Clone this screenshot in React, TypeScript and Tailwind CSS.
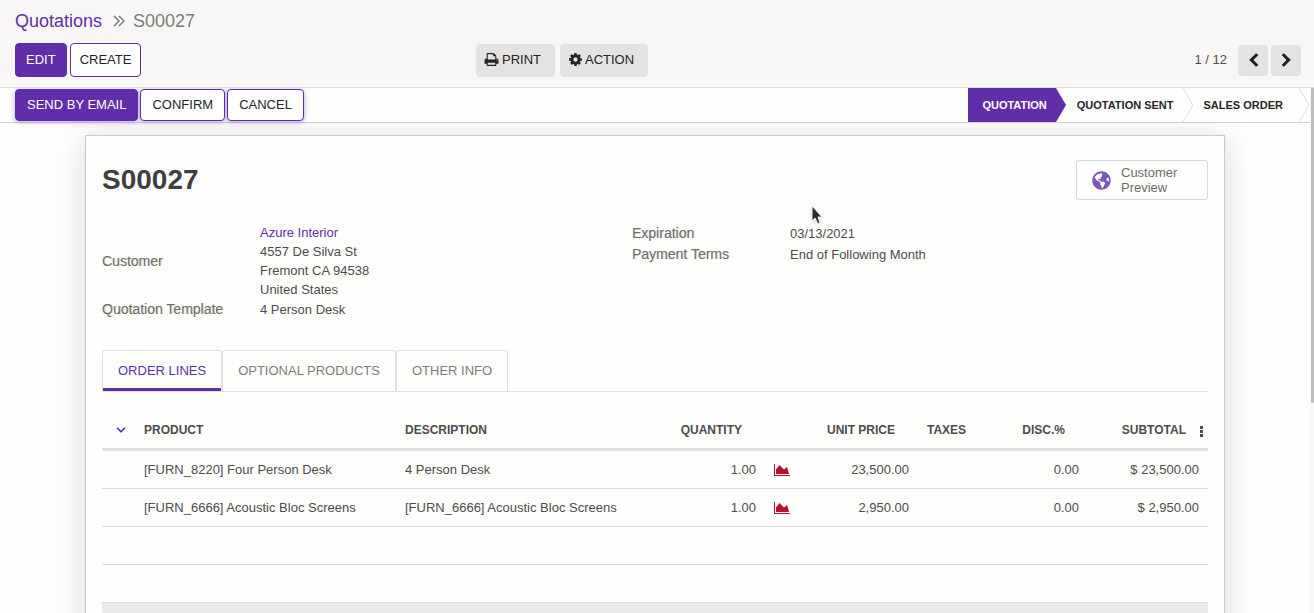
import { ReactNode, useState } from "react";
import { ChevronDown } from "lucide-react";
import { FaGlobeAmericas } from "react-icons/fa";

// ===== Types =====
type OrderLine = {
  product: string;
  description: string;
  quantity: string;
  unitPrice: string;
  discount: string;
  subtotal: string;
};

// ===== Data =====
const orderLines: OrderLine[] = [
  {
    product: "[FURN_8220] Four Person Desk",
    description: "4 Person Desk",
    quantity: "1.00",
    unitPrice: "23,500.00",
    discount: "0.00",
    subtotal: "$ 23,500.00",
  },
  {
    product: "[FURN_6666] Acoustic Bloc Screens",
    description: "[FURN_6666] Acoustic Bloc Screens",
    quantity: "1.00",
    unitPrice: "2,950.00",
    discount: "0.00",
    subtotal: "$ 2,950.00",
  },
];

const tabs = ["ORDER LINES", "OPTIONAL PRODUCTS", "OTHER INFO"];

const iconPaths = {
  print:
    "M448 1536h896v-256h-896v256zm0-640h896v-384h-160q-40 0-68-28t-28-68v-160h-640v640zm1152 64q0-26-19-45t-45-19-45 19-19 45 19 45 45 19 45-19 19-45zm128 0v416q0 13-9.5 22.5t-22.5 9.5h-224v160q0 40-28 68t-68 28h-960q-40 0-68-28t-28-68v-160h-224q-13 0-22.5-9.5t-9.5-22.5v-416q0-79 56.5-135.5t135.5-56.5h64v-544q0-40 28-68t68-28h672q40 0 88 20t76 48l152 152q28 28 48 76t20 88v256h64q79 0 135.5 56.5t56.5 135.5z",
  cog: "M1152 896q0-106-75-181t-181-75-181 75-75 181 75 181 181 75 181-75 75-181zm512-109v222q0 12-8 23t-20 13l-185 28q-19 54-39 91 35 50 107 138 10 12 10 25t-9 23q-27 37-99 108t-94 71q-12 0-26-9l-138-108q-44 23-91 38-16 136-29 186-7 28-36 28h-222q-14 0-24.5-8.5t-11.5-21.5l-28-184q-49-16-90-37l-141 107q-10 9-25 9-14 0-25-11-126-114-165-168-7-10-7-23 0-12 8-23 15-21 51-66.5t54-70.5q-27-50-41-99l-183-27q-13-2-21-12.5t-8-23.5v-222q0-12 8-23t19-13l186-28q14-46 39-92-40-57-107-138-10-12-10-24 0-10 9-23 26-36 98.5-107.5t94.5-71.5q13 0 26 10l138 107q44-23 91-38 16-136 29-186 7-28 36-28h222q14 0 24.5 8.5t11.5 21.5l28 184q49 16 90 37l142-107q9-9 24-9 13 0 25 10 129 119 165 170 7 8 7 22 0 12-8 23-15 21-51 66.5t-54 70.5q26 50 41 98l183 28q13 2 21 12.5t8 23.5z",
  left: "M1427 301l-531 531 531 531q19 19 19 45t-19 45l-166 166q-19 19-45 19t-45-19l-742-742q-19-19-19-45t19-45l742-742q19-19 45-19t45 19l166 166q19 19 19 45t-19 45z",
  right:
    "M1363 877l-742 742q-19 19-45 19t-45-19l-166-166q-19-19-19-45t19-45l531-531-531-531q-19-19-19-45t19-45l166-166q19-19 45-19t45 19l742 742q19 19 19 45t-19 45z",
};

// ===== Icons =====
function Icon({ name }: { name: keyof typeof iconPaths }) {
  return (
    <svg viewBox="0 0 1792 1792" className="size-[15px] shrink-0 fill-current" aria-hidden="true">
      <path d={iconPaths[name]} />
    </svg>
  );
}

function AreaChartIcon() {
  return (
    <svg viewBox="0 0 2048 1792" className="h-[14px] w-4 fill-[#b5102f]" aria-hidden="true">
      <path d="M2048 1536v128h-2048v-1536h128v1408h1920zM1664 512l256 896h-1664v-576l448-576 576 576z" />
    </svg>
  );
}

// ===== Status bar separator =====
function StepArrow() {
  return (
    <svg viewBox="0 0 11 34" className="h-[34px] w-[11px]" fill="none" aria-hidden="true">
      <path d="M0 0L10 17L0 34" stroke="#dcdde1" />
    </svg>
  );
}

// ===== Form row =====
function Field({ label, children }: { label: string; children: ReactNode }) {
  return (
    <div className="flex items-center">
      <dt className="w-[158px] shrink-0 pb-px text-sm text-[#6c6c68] [text-shadow:1px_0_0_#6c6c6840]">
        {label}
      </dt>
      <dd>{children}</dd>
    </div>
  );
}

// ===== Component =====
export default function App() {
  const [activeTab, setActiveTab] = useState(tabs[0]);

  return (
    <div className="flex h-screen flex-col overflow-hidden bg-[#fefefd] font-['Liberation_Sans',Arial,sans-serif] text-[13px] leading-[19px] text-[#4c4c4c]">
      {/* Control panel */}
      <header className="shrink-0 border-b border-[#dcdcde] bg-[#f8f7f6] pr-[13px] pb-2.5 pl-[15px]">
        <nav aria-label="Breadcrumb" className="flex h-[43px] items-center pb-0.5 text-lg text-[#7c7c79]">
          <a href="#quotations" className="text-[#5f2fa5]">
            Quotations
          </a>
          <svg
            viewBox="0 0 12 12"
            className="mr-2 ml-[11px] size-3 fill-none stroke-current"
            strokeWidth="1.5"
            aria-hidden="true"
          >
            <path d="M1 1l5 5-5 5M6 1l5 5-5 5" />
          </svg>
          <span>S00027</span>
        </nav>

        <div className="grid grid-cols-[461fr_825fr] items-center">
          <div className="flex gap-[3px]">
            <button className="h-[34px] rounded border border-[#5f2ea8] bg-[#5f2ea8] px-2.5 pb-0.5 text-white">
              EDIT
            </button>
            <button className="h-[34px] rounded border border-[#5f2ea8] bg-white px-[9px] pb-0.5 text-[#212529]">
              CREATE
            </button>
          </div>

          <div className="flex items-center justify-between">
            <div className="flex gap-[5px] text-[#212529]">
              <button className="flex h-[33px] items-center gap-[3px] rounded bg-[#e4e3e1] pr-3.5 pb-0.5 pl-2">
                <Icon name="print" />
                PRINT
              </button>
              <button className="flex h-[33px] items-center gap-0.5 rounded bg-[#e4e3e1] pr-3.5 pb-0.5 pl-2">
                <Icon name="cog" />
                ACTION
              </button>
            </div>

            <div className="flex items-center gap-[3px]">
              <span className="mr-2 pb-0.5">1 / 12</span>
              <button
                aria-label="Previous"
                className="flex h-[31px] w-[30px] items-center justify-center rounded bg-[#e4e3e1] text-[#212121]"
              >
                <Icon name="left" />
              </button>
              <button
                aria-label="Next"
                className="flex h-[31px] w-[30px] items-center justify-center rounded bg-[#e4e3e1] text-[#212121]"
              >
                <Icon name="right" />
              </button>
            </div>
          </div>
        </div>
      </header>

      <div className="flex min-h-0 flex-1">
        <main className="relative flex min-w-0 flex-1 flex-col overflow-hidden">
          {/* Status bar */}
          <div className="relative z-10 flex h-[35px] shrink-0 items-center justify-between border-b border-[#cfd0d8] bg-[#fefefd] pl-[15px]">
            <div className="flex gap-0.5">
              <button className="h-8 rounded border border-[#5f2ea8] bg-[#5f2ea8] px-[11px] pb-0.5 text-white shadow-[0_1px_5px_#5f2ea873]">
                SEND BY EMAIL
              </button>
              <button className="h-8 rounded border border-[#5f2ea8] bg-white px-[11px] pb-0.5 text-[#212529] shadow-[0_1px_5px_#5f2ea873]">
                CONFIRM
              </button>
              <button className="h-8 rounded border border-[#5f2ea8] bg-white px-[11px] pb-0.5 text-[#212529] shadow-[0_1px_5px_#5f2ea873]">
                CANCEL
              </button>
            </div>

            <ol className="flex text-[11px] leading-[34px] font-bold text-[#24272b]">
              <li className="flex">
                <span className="bg-[#5f2ea8] pr-[9px] pl-3.5 text-white">QUOTATION</span>
                <svg viewBox="0 0 11 34" className="h-[34px] w-[11px] fill-[#5f2ea8]" aria-hidden="true">
                  <path d="M0 0L10 17L0 34z" />
                </svg>
              </li>
              <li className="flex">
                <span className="pr-[9px] pl-2.5">QUOTATION SENT</span>
                <StepArrow />
              </li>
              <li className="flex">
                <span className="pr-4 pl-2.5">SALES ORDER</span>
                <StepArrow />
              </li>
            </ol>
          </div>

          {/* Sheet */}
          <section className="mx-auto mt-3 w-[calc(100%-24px)] max-w-[1140px] flex-1 border border-b-0 border-[#c8c8d0] bg-[#fefefd] px-4 pt-6 shadow-[0_5px_30px_#00000026]">
            <div className="flex items-start justify-between">
              <h1 className="pt-0.5 text-[28px] leading-9 font-bold text-[#3f3f3f]">S00027</h1>
              <button className="flex h-10 w-[132px] items-center gap-2.5 rounded-[3px] border border-[#d8dae2] pl-[15px] text-left leading-[15px] text-[#6c6c6a]">
                <FaGlobeAmericas className="size-[19px] shrink-0 text-[#7c56b8]" />
                <span>
                  Customer
                  <br />
                  Preview
                </span>
              </button>
            </div>

            {/* Customer and terms */}
            <div className="mt-[23px] grid grid-cols-[530fr_576fr] items-start">
              <dl>
                <Field label="Customer">
                  <a href="#customer" className="text-[#5f2fa5]">
                    Azure Interior
                  </a>
                  <br />
                  4557 De Silva St
                  <br />
                  Fremont CA 94538
                  <br />
                  United States
                </Field>
                <Field label="Quotation Template">4 Person Desk</Field>
              </dl>
              <dl>
                <Field label="Expiration">03/13/2021</Field>
                <Field label="Payment Terms">End of Following Month</Field>
              </dl>
            </div>

            {/* Tabs */}
            <div role="tablist" className="mt-[30px] flex border-b border-[#dee0e3]">
              {tabs.map((tab) => (
                <button
                  key={tab}
                  role="tab"
                  aria-selected={tab === activeTab}
                  onClick={() => setActiveTab(tab)}
                  className={`flex h-[41px] rounded-t-[3px] border border-b-0 border-[#dee0e3] px-[15px] pt-2.5 ${
                    tab === activeTab
                      ? "text-[#5f2fa5] shadow-[inset_0_-3px_#5f2ea8]"
                      : "text-[#7c7c79]"
                  }`}
                >
                  {tab}
                </button>
              ))}
            </div>

            {/* Order lines */}
            <table className="mt-4 w-full table-fixed border-separate border-spacing-0 whitespace-nowrap [&_td]:h-[38px] [&_td]:border-b [&_td]:border-[#dcdde0] [&_td]:px-[9px] [&_th]:h-[43px] [&_th]:border-b-3 [&_th]:border-[#dee0e2] [&_th]:px-[9px] [&_th]:pt-[3px]">
              <colgroup>
                <col className="w-[33px]" />
                <col className="w-[261px]" />
                <col />
                <col className="w-[99px]" />
                <col className="w-[35px]" />
                <col className="w-[118px]" />
                <col className="w-[72px]" />
                <col className="w-[98px]" />
                <col className="w-[120px]" />
              </colgroup>
              <thead>
                <tr className="text-left text-xs text-[#4c4c4c]">
                  <th>
                    <button aria-label="Collapse lines" className="flex w-5 justify-center text-[#5f2ea8]">
                      <ChevronDown className="size-3.5" strokeWidth={3} />
                    </button>
                  </th>
                  <th>PRODUCT</th>
                  <th>DESCRIPTION</th>
                  <th>
                    <div className="flex justify-end pr-3.5">QUANTITY</div>
                  </th>
                  <th aria-label="Forecast" />
                  <th>
                    <div className="flex justify-end pr-3.5">UNIT PRICE</div>
                  </th>
                  <th>TAXES</th>
                  <th>
                    <div className="flex justify-end pr-3.5">DISC.%</div>
                  </th>
                  <th className="pr-0!">
                    <div className="flex items-center justify-end gap-2">
                      SUBTOTAL
                      <button aria-label="Optional columns" className="flex w-[14px] justify-center pt-1">
                        <svg viewBox="0 0 3 11" className="h-[11px] w-[3px] fill-current" aria-hidden="true">
                          <path d="M0 0h3v3H0zM0 4h3v3H0zM0 8h3v3H0z" />
                        </svg>
                      </button>
                    </div>
                  </th>
                </tr>
              </thead>
              <tbody>
                {orderLines.map((line) => (
                  <tr key={line.product}>
                    <td />
                    <td>{line.product}</td>
                    <td>{line.description}</td>
                    <td className="text-right">{line.quantity}</td>
                    <td>
                      <AreaChartIcon />
                    </td>
                    <td className="text-right">{line.unitPrice}</td>
                    <td />
                    <td className="text-right">{line.discount}</td>
                    <td className="text-right">{line.subtotal}</td>
                  </tr>
                ))}
                <tr>
                  <td colSpan={9} />
                </tr>
                <tr>
                  <td colSpan={9} />
                </tr>
              </tbody>
              <tfoot>
                <tr>
                  <td colSpan={9} className="bg-[#eaeaea]" />
                </tr>
              </tfoot>
            </table>
          </section>

          {/* Mouse pointer */}
          <svg
            viewBox="0 0 12 20"
            className="pointer-events-none absolute top-[117px] left-[811px] z-20 h-5 w-3 drop-shadow-sm"
            aria-hidden="true"
          >
            <path d="M1 1v15l3-3 3 6 2-1-2-6h4z" fill="#2b2b2b" stroke="#f4f4f4" strokeWidth="1" />
          </svg>
        </main>

        {/* Scroll indicator */}
        <div className="w-1 shrink-0 bg-[#f7f7f7] pl-px">
          <div className="h-3/5 rounded-b-sm bg-[#bcbcbc]" />
        </div>
      </div>
    </div>
  );
}
